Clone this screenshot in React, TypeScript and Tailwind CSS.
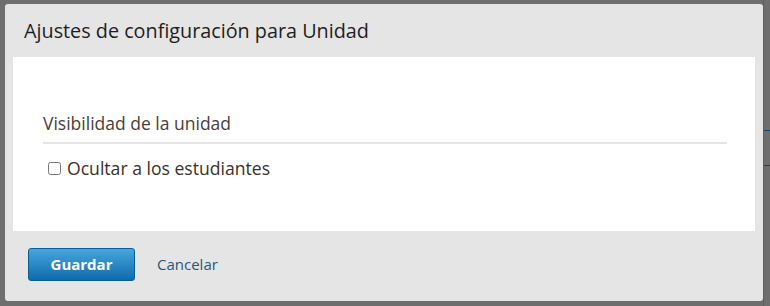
export default function App() {
  return (
    <div className="relative h-[306px] w-[770px] overflow-hidden bg-[#6e6e6e] pl-[5px] pt-[4px] font-['Open_Sans',sans-serif]">
      {/* page behind the overlay */}
      <div className="absolute right-0 top-0 h-full w-[7px] border-l border-[#5f5f5f]">
        <div className="mt-[130px] h-px w-full bg-[#0b4a6e]" />
        <div className="mt-[34px] h-px w-full bg-[#0b4a6e]" />
      </div>

      <div className="relative flex h-[297px] w-[758px] flex-col rounded-[3px] bg-[#e5e5e5]">
        <div className="flex h-[53px] items-center px-[19px]">
          <h2 className="text-[19.8px] leading-none text-[#1e1e1e]">Ajustes de configuración para Unidad</h2>
        </div>

        <div className="mx-[8px] h-[174px] bg-white pl-[30px] pr-[28px] pt-[55px]">
          <h3 className="border-b-2 border-[#e5e5e5] pb-[8px] text-[17.5px] leading-[22px] text-[#4a4038]">
            Visibilidad de la unidad
          </h3>
          <label className="mt-[12px] flex items-center gap-[6px] pl-[5px] text-[17.6px] leading-[24px] text-[#3b3129]">
            <input type="checkbox" className="h-[13px] w-[13px]" />
            Ocultar a los estudiantes
          </label>
        </div>

        <div className="flex items-center gap-[22px] px-[23px] pt-[17px]">
          <button className="h-[33px] w-[107px] rounded-[3px] border border-[#0b5e94] bg-gradient-to-b from-[#46a6dc] to-[#0b6cad] text-[15px] font-bold text-white">
            Guardar
          </button>
          <a href="#" className="text-[15px] text-[#26577b]">
            Cancelar
          </a>
        </div>
      </div>
    </div>
  )
}
